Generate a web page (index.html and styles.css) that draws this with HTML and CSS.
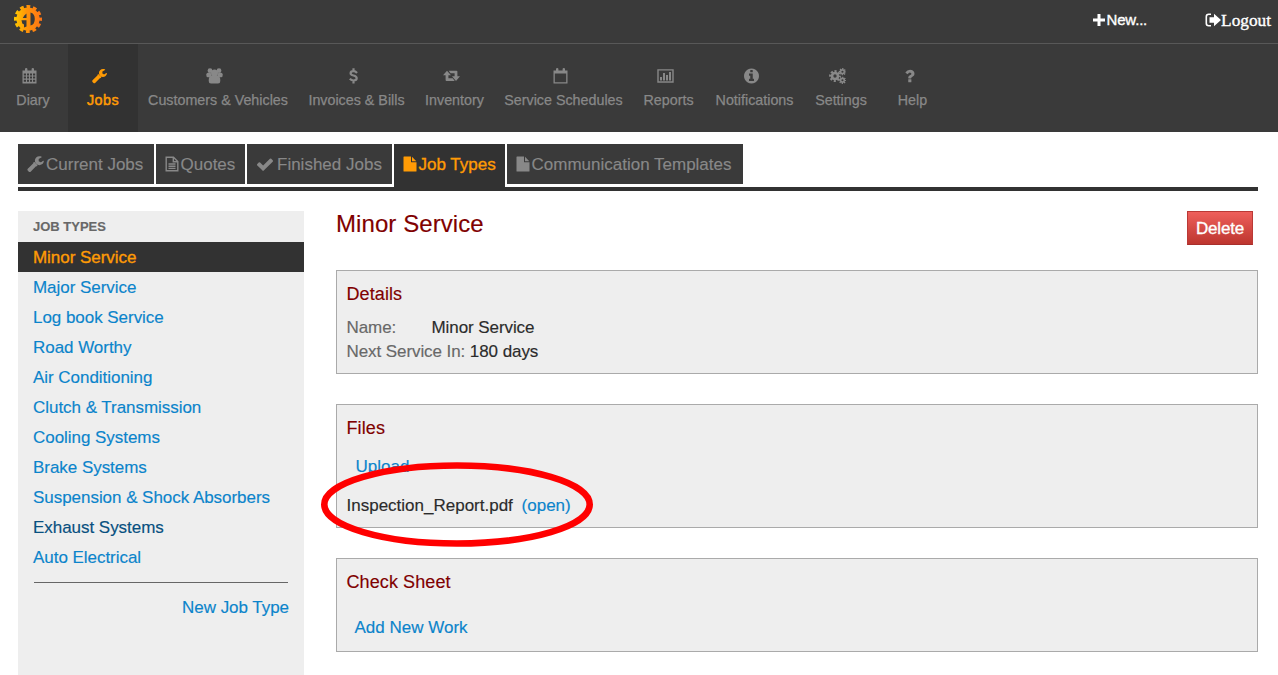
FILE: index.html
```html
<!DOCTYPE html>
<html lang="en">
<head>
<meta charset="utf-8">
<title>Job Types</title>
<link rel="stylesheet" href="styles.css">
</head>
<body>
<svg class="defs" aria-hidden="true">
  <symbol id="wrench" viewBox="64 110 1664 1600"><path d="M1092 1052l-682 682q-37 37-90 37-52 0-91-37l-106-108q-38-36-38-90 0-53 38-91l681-681q39 98 114.500 173.500t173.500 114.500z" transform="translate(0 -60)"/><path d="M760 720L1100 1060 1000 1150 650 800z"/><path d="M1726 617q0 39-23 106-47 134-164.500 217.500t-258.500 83.500q-185 0-316.500-131.500t-131.500-316.500 131.500-316.500 316.500-131.500q58 0 121.500 16.500t107.500 46.500q16 11 16 28t-16 28l-293 169v224l193 107q5-3 79-48.500t135.500-81 70.500-35.500q15 0 23.500 10t8.500 25z"/></symbol>
  <symbol id="file" viewBox="0 0 14 16"><path d="M1 .5H8v5.200q0 .6.600.6H13.500v8.700q0 .5-.5.5h-12q-.5 0-.5-.5v-14q0-.5.500-.5zM9 .7L13.300 5.300H9z"/></symbol>
  <symbol id="cog" viewBox="-10 -10 20 20"><circle r="5" fill="none" stroke="currentColor" stroke-width="4.400"/><circle r="8" fill="none" stroke="currentColor" stroke-width="3.800" stroke-dasharray="3.540 2.743" stroke-dashoffset="1.770"/></symbol>
</svg>

<header class="topbar">
  <svg class="logo" viewBox="0 0 28 28">
    <defs>
      <linearGradient id="flame" gradientUnits="userSpaceOnUse" x1="0" y1="14" x2="28" y2="14"><stop offset="0" stop-color="#fc0"/><stop offset=".45" stop-color="#ff9408"/><stop offset="1" stop-color="#ff7418"/></linearGradient>
      <mask id="initials">
        <rect width="28" height="28" fill="#fff"/>
        <path fill="#000" d="M16.500 7.500Q20.800 8.500 20.800 14T16.500 20.500zM12.500 8.500V13H8.800Q10 10 12.500 8.500zM7.500 15.200H12.500V21.500L10 22.500V19.500L8.300 18.500z"/>
      </mask>
    </defs>
    <g mask="url(#initials)">
      <circle cx="14" cy="14" r="11.600" fill="url(#flame)"/>
      <circle cx="14" cy="14" r="12.500" fill="none" stroke="url(#flame)" stroke-width="3" stroke-dasharray="3.800 2.745" stroke-dashoffset="1.900"/>
    </g>
  </svg>
  <div class="account">
    <a class="new"><svg viewBox="0 0 12 12"><path d="M4.500 0h3v4.500H12v3H7.500V12h-3V7.500H0v-3h4.500z"/></svg>New...</a>
    <a class="logout"><svg viewBox="0 0 16 14"><path fill="none" stroke="currentColor" stroke-width="1.600" d="M6 1.300H3.700Q1.300 1.300 1.300 3.700V10.300Q1.300 12.700 3.700 12.700H6"/><path d="M4.500 4.300H9V.8L16 7 9 13.200V9.700H4.500z"/></svg>Logout</a>
  </div>
</header>

<nav class="mainnav">
  <a class="diary"><svg viewBox="0 0 15 16"><path fill-rule="evenodd" d="M.5 2.500H3V1Q3 0 4.200 0T5.400 1V2.500H9.600V1Q9.600 0 10.800 0T12 1V2.500H14.500V15.500H.5zM1.800 5.500v2h2.200v-2zm3.200 0v2h2v-2zm3 0v2h2v-2zm3 0v2h2.200v-2zM1.800 8.600v2h2.200v-2zm3.200 0v2h2v-2zm3 0v2h2v-2zm3 0v2h2.200v-2zM1.800 11.700v2h2.200v-2zm3.200 0v2h2v-2zm3 0v2h2v-2zm3 0v2h2.200v-2z"/></svg>Diary</a>
  <a class="active"><svg><use href="#wrench"/></svg>Jobs</a>
  <a><svg class="wide" viewBox="0 0 17 16"><circle cx="4" cy="2.700" r="2.400"/><circle cx="13" cy="2.700" r="2.400"/><circle cx="8.500" cy="5" r="3.500"/><rect x=".4" y="4.800" width="5" height="4.400" rx="1.500"/><rect x="11.600" y="4.800" width="5" height="4.400" rx="1.500"/><path d="M2.700 13Q2.700 7.500 5.500 7.500H11.500Q14.300 7.500 14.300 13 14.300 15.500 12 15.500H5Q2.700 15.500 2.700 13z"/></svg>Customers &amp; Vehicles</a>
  <a><svg viewBox="0 0 15 16"><path fill="none" stroke="currentColor" stroke-width="2.200" d="M11 5Q9.500 3.200 7.500 3.200 4.600 3.200 4.600 5.200 4.600 6.800 7.500 7.500 10.700 8.200 10.700 10.300 10.700 12.500 7.500 12.500 5.500 12.500 3.800 10.700M7.500.3V3.400M7.500 12.500V15.500"/></svg>Invoices &amp; Bills</a>
  <a><svg class="wide" viewBox="0 0 17 16"><path d="M4 2.700L8 7.300H5.400V10.300H9.700L11.700 12.900H3.500Q2.600 12.900 2.600 12V7.300H0zM5.600 2.700H13.500Q14.400 2.700 14.400 3.600V8.300H17L13 12.900 9 8.300H11.600V5.300H7.600z"/></svg>Inventory</a>
  <a><svg viewBox="0 0 15 16"><path fill-rule="evenodd" d="M.5 2.500H3V1Q3 0 4.200 0T5.400 1V2.500H9.600V1Q9.600 0 10.800 0T12 1V2.500H14.500V15.500H.5zM1.800 5.500V14.200H13.200V5.500z"/></svg>Service Schedules</a>
  <a><svg class="wide" viewBox="0 0 17 16"><path fill="none" stroke="currentColor" stroke-width="1.400" d="M1 1.900H16V14H1z"/><path d="M3 9h2v3.500H3zM6 5h2v7.500H6zM9 7h2v5.500H9zM12 4h2v8.500h-2z"/></svg>Reports</a>
  <a><svg viewBox="128 128 1536 1536"><path fill-rule="evenodd" d="M1152 1376v-160q0-14-9-23t-23-9h-96v-512q0-14-9-23t-23-9h-320q-14 0-23 9t-9 23v160q0 14 9 23t23 9h96v320h-96q-14 0-23 9t-9 23v160q0 14 9 23t23 9h448q14 0 23-9t9-23zm-128-896v-160q0-14-9-23t-23-9h-192q-14 0-23 9t-9 23v160q0 14 9 23t23 9h192q14 0 23-9t9-23zm640 416q0 209-103 385.500t-279.500 279.500-385.500 103-385.500-103-279.500-279.500-103-385.500 103-385.500 279.500-279.500 385.500-103 385.500 103 279.500 279.500 103 385.500z"/></svg>Notifications</a>
  <a><svg class="wide" viewBox="0 0 17 16"><use href="#cog" x="0" y="2" width="12" height="12"/><use href="#cog" x="9.700" y="0" width="7.500" height="7.500"/><use href="#cog" x="9.700" y="8.500" width="7.500" height="7.500"/></svg>Settings</a>
  <a class="help"><svg viewBox="128 128 1536 1536"><path d="M1088 1256v240q0 16-12 28t-28 12h-240q-16 0-28-12t-12-28v-240q0-16 12-28t28-12h240q16 0 28 12t12 28zm316-600q0 54-15.500 101t-35 76.500-55 59.500-57.500 43.500-61 35.500q-41 23-68.500 65t-27.500 67q0 17-12 32.500t-28 15.500h-240q-15 0-25.500-18.500t-10.500-37.500v-45q0-83 65-156.500t143-108.500q59-27 84-56t25-76q0-42-46.500-74t-107.500-32q-65 0-108 29-35 25-107 115-13 16-31 16-12 0-25-8l-164-125q-13-10-15.500-25t5.500-28q160-266 464-266 80 0 161 31t146 83 106 127.500 41 158.500z"/></svg>Help</a>
</nav>

<nav class="tabs">
  <a><svg class="spanner"><use href="#wrench"/></svg><span>Current Jobs</span></a>
  <a><svg class="sheet" viewBox="0 0 14 16"><path fill="none" stroke="currentColor" stroke-width="1.400" d="M1.200 1.200H8.500L12.800 5.500V14.800H1.200zM8.300 1.200V5.700H12.800M3.500 8H10.500M3.500 10.200H10.500M3.500 12.400H10.500"/></svg><span>Quotes</span></a>
  <a><svg class="tick" viewBox="120 300 1552 1222"><path d="M1671 566q0 40-28 68l-724 724-136 136q-28 28-68 28t-68-28l-136-136-362-362q-28-28-28-68t28-68l136-136q28-28 68-28t68 28l294 295 656-657q28-28 68-28t68 28l136 136q28 28 28 68z"/></svg><span>Finished Jobs</span></a>
  <a class="active"><svg class="sheet"><use href="#file"/></svg><span>Job Types</span></a>
  <a><svg class="sheet"><use href="#file"/></svg><span>Communication Templates</span></a>
</nav>

<main class="content">
  <aside class="sidebar">
    <h2>JOB TYPES</h2>
    <a class="active">Minor Service</a>
    <a>Major Service</a>
    <a>Log book Service</a>
    <a>Road Worthy</a>
    <a>Air Conditioning</a>
    <a>Clutch &amp; Transmission</a>
    <a>Cooling Systems</a>
    <a>Brake Systems</a>
    <a>Suspension &amp; Shock Absorbers</a>
    <a class="hovered">Exhaust Systems</a>
    <a>Auto Electrical</a>
    <hr>
    <a class="create">New Job Type</a>
  </aside>
  <section class="detail">
    <div class="heading"><h1>Minor Service</h1><button>Delete</button></div>
    <div class="panel details">
      <h3>Details</h3>
      <p><span class="label name">Name:</span>Minor Service</p>
      <p><span class="label">Next Service In:</span> 180 days</p>
    </div>
    <div class="panel files">
      <h3>Files</h3>
      <a class="upload">Upload</a>
      <p class="file">Inspection_Report.pdf <a>(open)</a></p>
      <svg class="marker" viewBox="0 0 274 87"><ellipse cx="137" cy="43.500" rx="132.700" ry="39"/></svg>
    </div>
    <div class="panel checks">
      <h3>Check Sheet</h3>
      <a class="add">Add New Work</a>
    </div>
  </section>
</main>
</body>
</html>
```
FILE: styles.css
```css
* { box-sizing: border-box; }
body {
  margin: 0;
  height: 675px;
  overflow: hidden;
  display: flex;
  flex-direction: column;
  background: #fff;
  color: #2b2b2b;
  font: 17px/24px "Liberation Sans", Arial, sans-serif;
  -webkit-text-stroke: .15px;
}
h1, h2, h3, p { margin: 0; font-weight: normal; }
svg { fill: currentColor; flex: none; }
.defs { position: absolute; width: 0; height: 0; }

.topbar {
  display: flex;
  justify-content: space-between;
  height: 44px;
  padding: 5px 7px 0 14px;
  background: #3a3a3a;
  border-bottom: 1px solid #585858;
  flex: none;
}
.logo { width: 28px; height: 28px; }
.account { display: flex; gap: 58px; color: #fff; height: 30px; }
.account a { display: flex; align-items: center; }
.new { font-size: 15px; letter-spacing: -.2px; -webkit-text-stroke: .35px; }
.new svg { width: 12px; height: 12px; margin-right: 2px; }
.logout { font-family: "Liberation Serif", "Times New Roman", serif; font-size: 17.300px; padding-top: 2px; -webkit-text-stroke: .35px; }
.logout svg { width: 16px; height: 14px; margin-bottom: 2px; }

.mainnav {
  display: grid;
  grid-template-columns: 68px 70px 160px 117px 79px 139px 71px 101px 72px 71px;
  height: 88px;
  background: #3a3a3a;
  color: #888;
  font-size: 14.300px;
  line-height: 18px;
  white-space: nowrap;
  flex: none;
  -webkit-text-stroke: .25px;
}
.mainnav a {
  display: flex;
  flex-direction: column;
  align-items: center;
  gap: 7px;
  padding-top: 24px;
}
.mainnav svg { width: 15px; height: 16px; margin-right: 7px; }
.mainnav svg.wide { width: 17px; }
.mainnav .diary { padding-right: 2px; }
.mainnav .active { background: #323232; color: #ff9b05; letter-spacing: .5px; -webkit-text-stroke: .5px; }

.tabs {
  display: grid;
  grid-template-columns: 136px 89px 145px 111px 236px;
  column-gap: 2px;
  align-items: start;
  height: 47px;
  margin: 12px 20px 0 18px;
  border-bottom: 4px solid #323232;
  color: #888;
  white-space: nowrap;
  flex: none;
}
.tabs a { display: flex; align-items: center; height: 40px; padding-left: 9px; background: #3a3a3a; }
.tabs span { padding-top: 1px; }
.tabs .active { height: 43px; padding-bottom: 3px; background: #323232; color: #ff9b05; -webkit-text-stroke: .35px; }
.spanner { width: 17px; height: 16px; margin-right: 2px; }
.sheet { width: 14px; height: 16px; margin-right: 1.500px; }
.tick { width: 16px; height: 13px; margin: 0 4px 0 1px; }

.content { display: flex; gap: 32px; padding: 20px 20px 0 18px; flex: 1; min-height: 0; }
.sidebar { width: 286px; background: #eee; color: #0b84cb; flex: none; }
.sidebar h2 { height: 31px; padding-left: 15px; color: #686868; font-size: 13px; line-height: 31px; font-weight: bold; }
.sidebar a { display: block; height: 30px; padding: 1px 0 0 15px; line-height: 30px; letter-spacing: -.04px; }
.sidebar .active { background: #323232; color: #ff9b05; -webkit-text-stroke: .35px; }
.sidebar .hovered { color: #085080; }
.sidebar hr { height: 1px; margin: 10px 16px 9px; border: 0; background: #666; }
.sidebar .create { padding-right: 15px; text-align: right; }

.detail { flex: 1; color: #2b2b2b; }
.heading { display: flex; justify-content: space-between; height: 59px; padding-right: 5px; }
h1 { color: #800000; font-size: 24px; line-height: 26px; letter-spacing: .08px; }
button {
  width: 66px;
  height: 34px;
  padding: 1px 0 0;
  border: 1px solid #ba3936;
  border-bottom-color: #a82f2c;
  background: linear-gradient(#ee5f5b, #bd362f);
  color: #fff;
  font: 17px "Liberation Sans", Arial, sans-serif;
  letter-spacing: -.2px;
  -webkit-text-stroke: .35px;
}
.panel { position: relative; padding: 11px 9.500px 0; margin-bottom: 30px; border: 1px solid #aaa; background: #eee; }
.panel a { color: #0b84cb; }
h3 { color: #800000; font-size: 18px; line-height: 24px; letter-spacing: .1px; }
.details { height: 104px; }
.details h3 { margin-bottom: 10px; }
.details p { letter-spacing: -.08px; }
.label { color: #686868; }
.name { display: inline-block; width: 85px; }
.files { height: 124px; }
.upload { display: block; padding: 15px 0 0 9px; }
.file { padding-top: 15px; }
.file a { margin-left: 4px; }
.marker { position: absolute; left: -17px; top: 56px; width: 274px; height: 87px; fill: none; stroke: #f00; stroke-width: 6.600px; }
.checks { height: 94px; margin: 0; }
.add { display: block; padding: 22px 0 0 8px; }
```
